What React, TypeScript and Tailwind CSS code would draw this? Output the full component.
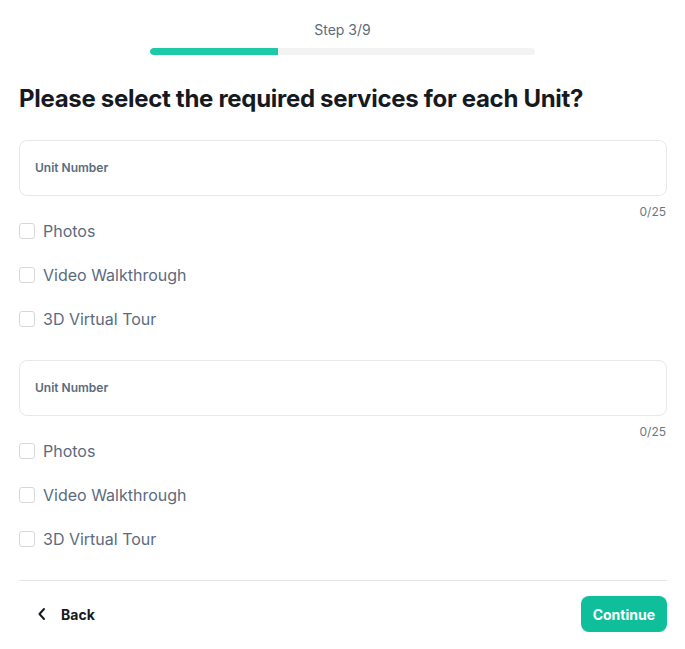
import React from "react";

const services = ["Photos", "Video Walkthrough", "3D Virtual Tour"];

function UnitBlock() {
  return (
    <div className="flex flex-col">
      <div className="h-[56px] rounded-[8px] border border-[#e6e8ea] flex items-center px-[15px]">
        <span className="text-[12px] font-semibold text-[#5b6b7e]">Unit Number</span>
      </div>
      <div className="flex justify-end pr-[1px] mt-[8px] h-[16px] items-center">
        <span className="text-[12px] text-[#6b7785]">0/25</span>
      </div>
      <div className="flex flex-col gap-[28px] mt-[3px]">
        {services.map((s) => (
          <label key={s} className="flex items-center gap-[8px] h-[16px]">
            <span className="w-[16px] h-[16px] rounded-[3px] border border-[#d6d9dc] bg-white" />
            <span className="text-[16px] text-[#5b6b7e] leading-none">{s}</span>
          </label>
        ))}
      </div>
    </div>
  );
}

export default function App() {
  return (
    <div className="w-[685px] h-[649px] bg-white" style={{ fontFamily: "Inter, 'Noto Sans', sans-serif" }}>
      <div className="flex flex-col items-center pt-[21px]">
        <span className="text-[14px] text-[#5b6b7e] leading-[18px]">Step 3/9</span>
        <div className="mt-[9px] w-[385px] h-[7px] rounded-full bg-[#f3f3f3] overflow-hidden">
          <div className="h-full w-[128px] bg-[#1ccaa7] rounded-l-full" />
        </div>
      </div>
      <div className="pl-[19px] pr-[18px]">
        <h1 className="mt-[29px] text-[24px] font-bold text-[#161a1f] leading-[30px] tracking-[-0.3px]">
          Please select the required services for each Unit?
        </h1>
        <div className="mt-[26px] flex flex-col gap-[33px]">
          <UnitBlock />
          <UnitBlock />
        </div>
        <div className="mt-[33px] border-t border-[#e3e5e7] pt-[15px] flex items-center justify-between">
          <button className="flex items-center gap-[14px] pl-[18px] h-[36px]">
            <svg width="10" height="14" viewBox="0 0 10 14" fill="none">
              <path d="M7 2L2.5 7L7 12" stroke="#161a1f" strokeWidth="2" strokeLinecap="round" strokeLinejoin="round" />
            </svg>
            <span className="text-[14px] font-bold text-[#161a1f]">Back</span>
          </button>
          <button className="h-[36px] px-[12px] rounded-[8px] bg-[#0fbf9b] text-white text-[14px] font-bold">
            Continue
          </button>
        </div>
      </div>
    </div>
  );
}
